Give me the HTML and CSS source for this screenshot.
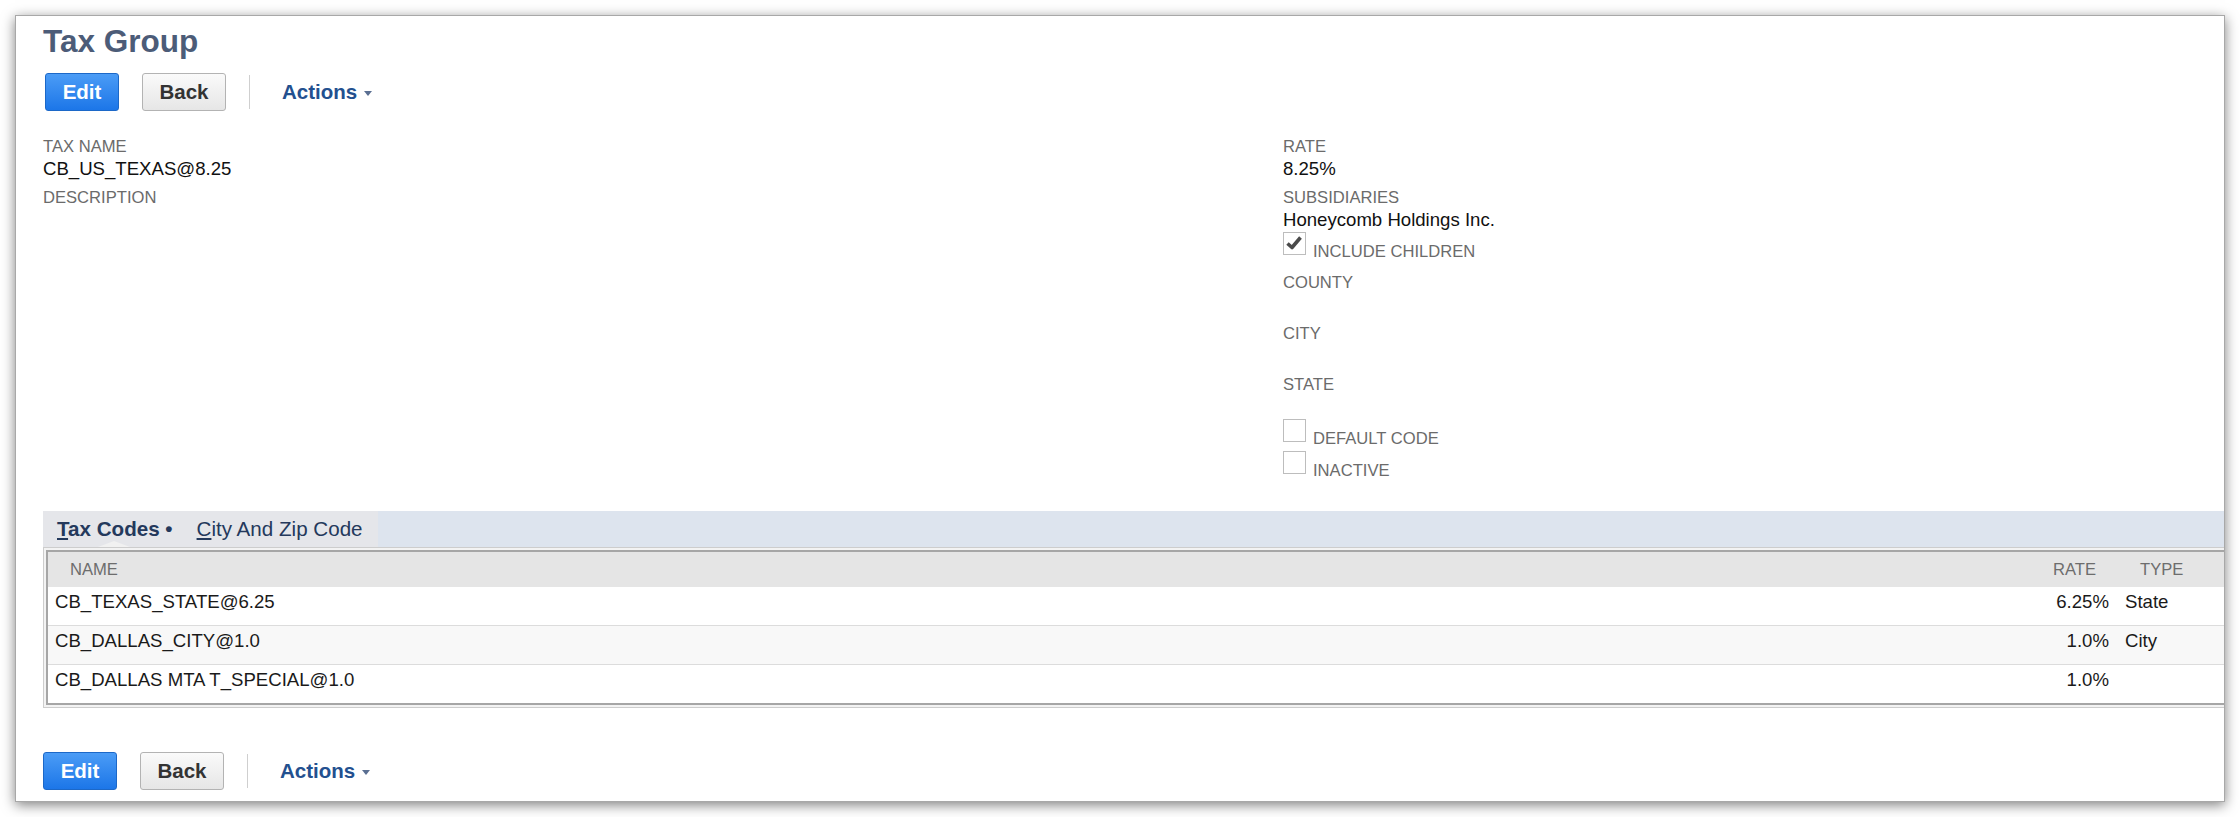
FILE: index.html
```html
<html>
  <head>
    <title>Tax Group</title>
    <link rel="stylesheet" href="styles.css">
  </head>
  <body>
    <div class="window">
      <h1 class="title">Tax Group</h1>

      <div class="toolbar toolbar-top">
        <button class="btn btn-primary">Edit</button>
        <button class="btn">Back</button>
        <span class="divider"></span>
        <a class="actions" href="#">Actions<span class="caret"></span></a>
      </div>

      <div class="fields">
        <div class="col">
          <div class="field">
            <div class="label">TAX NAME</div>
            <div class="value">CB_US_TEXAS@8.25</div>
          </div>
          <div class="field">
            <div class="label">DESCRIPTION</div>
            <div class="value"></div>
          </div>
        </div>
        <div class="col">
          <div class="field">
            <div class="label">RATE</div>
            <div class="value">8.25%</div>
          </div>
          <div class="field field-tight">
            <div class="label">SUBSIDIARIES</div>
            <div class="value">Honeycomb Holdings Inc.</div>
            <div class="checkrow">
              <span class="checkbox">
                <svg width="21" height="21" viewBox="0 0 21 21"><path d="M3.5 10.5 L8 14.5 L16.5 4.5" fill="none" stroke="#4a4a4a" stroke-width="3.6" stroke-linejoin="round"/></svg>
              </span>
              <span class="checklabel">INCLUDE CHILDREN</span>
            </div>
          </div>
          <div class="field">
            <div class="label">COUNTY</div>
            <div class="value"></div>
          </div>
          <div class="field">
            <div class="label">CITY</div>
            <div class="value"></div>
          </div>
          <div class="field field-last">
            <div class="label">STATE</div>
            <div class="value"></div>
            <div class="checkrow">
              <span class="checkbox"></span>
              <span class="checklabel">DEFAULT CODE</span>
            </div>
            <div class="checkrow">
              <span class="checkbox"></span>
              <span class="checklabel">INACTIVE</span>
            </div>
          </div>
        </div>
      </div>

      <div class="subtabs">
        <div class="tabbar">
          <div class="tabs">
            <span class="tab active"><u>T</u>ax Codes &bull;</span>
            <span class="tab tab-second"><u>C</u>ity And Zip Code</span>
          </div>
        </div>
        <div class="frame">
          <div class="grid-box">
            <table class="grid">
              <colgroup>
                <col>
                <col class="col-rate">
                <col class="col-type">
              </colgroup>
              <tr>
                <th>NAME</th>
                <th class="num">RATE</th>
                <th>TYPE</th>
              </tr>
              <tr>
                <td>CB_TEXAS_STATE@6.25</td>
                <td class="num">6.25%</td>
                <td>State</td>
              </tr>
              <tr class="alt">
                <td>CB_DALLAS_CITY@1.0</td>
                <td class="num">1.0%</td>
                <td>City</td>
              </tr>
              <tr class="last">
                <td>CB_DALLAS MTA T_SPECIAL@1.0</td>
                <td class="num">1.0%</td>
                <td></td>
              </tr>
            </table>
          </div>
        </div>
      </div>

      <div class="toolbar toolbar-bottom">
        <button class="btn btn-primary">Edit</button>
        <button class="btn">Back</button>
        <span class="divider"></span>
        <a class="actions" href="#">Actions<span class="caret"></span></a>
      </div>
    </div>
  </body>
</html>
```

FILE: styles.css
```css
body {
  margin: 0;
  background: #fff;
  font-family: "Liberation Sans", Arial, sans-serif;
}
.window {
  margin: 15px;
  border: 1px solid #a8a8a8;
  background: #fff;
  box-shadow: 0 3px 12px rgba(0, 0, 0, 0.5);
  padding: 7px 0 11px 27px;
  overflow: hidden;
}
.title {
  margin: 0;
  font-size: 31.5px;
  line-height: 36px;
  font-weight: bold;
  color: #4c5c78;
}

/* toolbar */
.toolbar {
  display: flex;
  align-items: center;
  margin-top: 14px;
}
.toolbar-top {
  padding-left: 2px;
}
.toolbar-bottom {
  margin-top: 44px;
}
.btn {
  box-sizing: border-box;
  height: 38px;
  padding: 0;
  margin-right: 23px;
  font-family: "Liberation Sans", Arial, sans-serif;
  font-size: 20.5px;
  font-weight: bold;
  color: #333;
  border: 1px solid #b3b3b3;
  border-radius: 3px;
  background: linear-gradient(#fafafa, #e6e6e6);
}
.btn-primary {
  width: 74px;
  color: #fff;
  border-color: #1c68c8;
  background: linear-gradient(#4b9cf6, #1c76e8);
}
.btn + .btn {
  width: 84px;
}
.divider {
  width: 1px;
  height: 34px;
  background: #cfcfcf;
  margin-right: 32px;
}
.actions {
  display: flex;
  align-items: center;
  font-size: 20.5px;
  font-weight: bold;
  color: #23508f;
  text-decoration: none;
}
.caret {
  margin-left: 7px;
  margin-top: 3px;
  border-left: 4.5px solid transparent;
  border-right: 4.5px solid transparent;
  border-top: 5px solid #5a6f92;
}

/* fields */
.fields {
  display: grid;
  grid-template-columns: 1240px 1fr;
  margin-top: 27px;
}
.field {
  margin-bottom: 10px;
}
.field-tight {
  margin-bottom: 13px;
}
.field-last {
  margin-bottom: 0;
}
.label {
  font-size: 16.6px;
  line-height: 18px;
  color: #6b6b6b;
}
.value {
  margin-top: 2px;
  min-height: 21px;
  font-size: 18.6px;
  line-height: 21px;
  color: #111;
}
.checkrow {
  display: flex;
  align-items: flex-start;
  margin-top: 2px;
}
.checkrow + .checkrow {
  margin-top: 3px;
}
.checkbox {
  box-sizing: border-box;
  width: 23px;
  height: 23px;
  border: 1px solid #bdbdbd;
  background: #fff;
}
.checkbox svg {
  display: block;
}
.checklabel {
  margin-left: 7px;
  margin-top: 11px;
  font-size: 16.6px;
  line-height: 18px;
  color: #6b6b6b;
}

/* subtabs + list */
.subtabs {
  margin-top: 31px;
  margin-right: -20px;
}
.tabbar {
  display: flex;
  height: 36px;
  background: #dde4ee;
}
.tabs {
  display: flex;
  background: #e5e6ea;
}
.tab {
  padding: 0 12px;
  font-size: 20.6px;
  line-height: 36px;
  color: #24395c;
}
.tab.active {
  position: relative;
  padding-left: 14px;
  font-weight: bold;
}
.tab-second {
  padding-right: 15px;
}
.tab.active::after {
  content: "";
  position: absolute;
  left: 55px;
  bottom: 0;
  border-left: 16px solid transparent;
  border-right: 16px solid transparent;
  border-bottom: 6px solid #f1f1f1;
}
.frame {
  border: 1px solid #cdcdcd;
  padding: 2px;
  background: #f3f3f3;
}
.grid-box {
  border: 2px solid #a6a6a6;
  background: #fff;
}
.grid {
  width: 100%;
  border-collapse: collapse;
}
.col-rate {
  width: 100px;
}
.col-type {
  width: 121px;
}
.grid th {
  height: 35px;
  padding: 0 0 0 22px;
  background: #e5e5e5;
  font-size: 16.6px;
  font-weight: normal;
  line-height: 35px;
  color: #6d6d6d;
  text-align: left;
}
.grid th.num {
  text-align: right;
  padding: 0 22px 0 0;
}
.grid td {
  padding: 4px 7px 13px;
  border-bottom: 1px solid #dcdcdc;
  font-size: 18.6px;
  line-height: 21px;
  color: #1a1a1a;
  vertical-align: top;
}
.grid td.num {
  text-align: right;
  padding-right: 9px;
}
.grid tr.alt td {
  background: #f8f8f8;
}
.grid tr.last td {
  border-bottom: none;
}
```
